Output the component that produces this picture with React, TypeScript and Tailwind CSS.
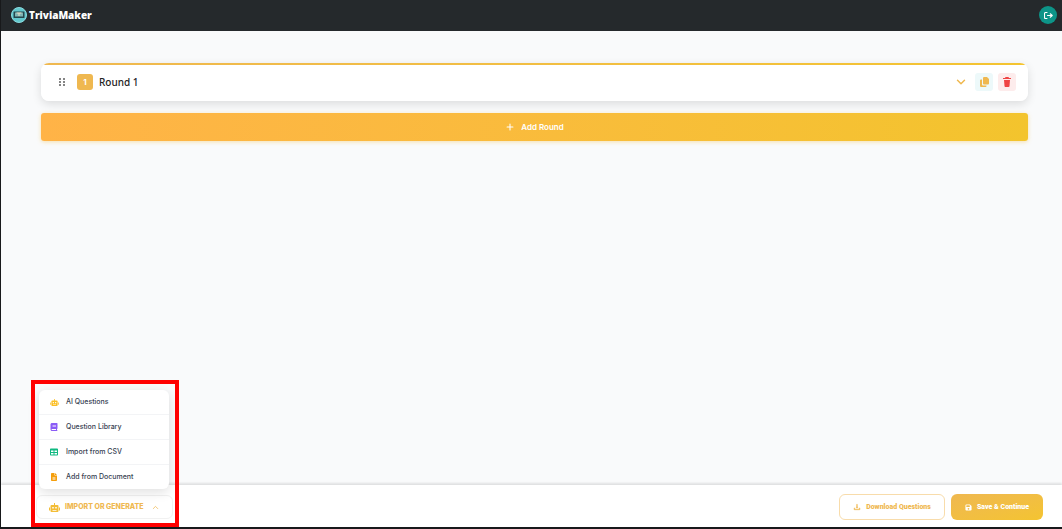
import { useState } from 'react';
import { FaBook, FaFileLines, FaFloppyDisk, FaTable } from 'react-icons/fa6';
import { AiOutlineDownload } from 'react-icons/ai';
import { ChevronDown, ChevronUp, Plus } from 'lucide-react';

function RobotIcon({ size }: { size: number }) {
    return (
        <svg viewBox="0 0 22 18" width={size} height={Math.round(size * 0.82)} fill="currentColor" aria-hidden="true">
            <path
                fillRule="evenodd"
                d="M10 0h2v4h5a2 2 0 0 1 2 2v10a2 2 0 0 1-2 2H5a2 2 0 0 1-2-2V6a2 2 0 0 1 2-2h5zM6.500 8v3h3V8zM12.500 8v3h3V8zM7 14v1.500h8V14z"
            />
            <path d="M0 9h2v6H0zM20 9h2v6h-2z" />
        </svg>
    );
}

const importOptions = [
    { label: 'AI Questions', icon: RobotIcon, size: 9, color: 'text-[#fbbf24]' },
    { label: 'Question Library', icon: FaBook, size: 8, color: 'text-[#8b5cf6]' },
    { label: 'Import from CSV', icon: FaTable, size: 8, color: 'text-[#10b981]' },
    { label: 'Add from Document', icon: FaFileLines, size: 8, color: 'text-[#f59e0b]' },
];

function Logo() {
    return (
        <svg viewBox="0 0 32 32" className="size-4" aria-hidden="true">
            <circle cx="16" cy="16" r="15" fill="#62c8cd" stroke="#8adbe0" strokeWidth="2" />
            <rect x="5" y="9" width="22" height="13" rx="1" fill="#24474d" />
            <rect x="8" y="11" width="16" height="8" fill="#7fb5b4" />
            <path d="M11 11h10v2h-4v5h-2v-5h-4z" fill="#e9dfc5" />
        </svg>
    );
}

function GripDots() {
    return (
        <svg viewBox="0 0 6 8" className="h-2 w-[6px]" fill="#858585" aria-hidden="true">
            <rect x="0" y="0" width="2" height="2" />
            <rect x="4" y="0" width="2" height="2" />
            <rect x="0" y="3" width="2" height="2" />
            <rect x="4" y="3" width="2" height="2" />
            <rect x="0" y="6" width="2" height="2" />
            <rect x="4" y="6" width="2" height="2" />
        </svg>
    );
}

function ExitIcon() {
    return (
        <svg
            viewBox="0 0 18 14"
            className="h-[7px] w-[9px]"
            fill="none"
            stroke="currentColor"
            strokeWidth="2.2"
            strokeLinecap="round"
            strokeLinejoin="round"
            aria-hidden="true"
        >
            <path d="M6 1H3a2 2 0 0 0-2 2v8a2 2 0 0 0 2 2h3" />
            <path d="M7 7h9M12.500 3.500L16.500 7l-4 3.500" />
        </svg>
    );
}

function CopyIcon() {
    return (
        <svg viewBox="0 0 18 20" className="h-[10px] w-[9px]" fill="currentColor" aria-hidden="true">
            <path d="M8 0h6l4 4v9a2 2 0 0 1-2 2H8a2 2 0 0 1-2-2V2a2 2 0 0 1 2-2z" />
            <path d="M2 5h2v10a2 2 0 0 0 2 2h7v1a2 2 0 0 1-2 2H2a2 2 0 0 1-2-2V7a2 2 0 0 1 2-2z" />
        </svg>
    );
}

function TrashIcon() {
    return (
        <svg viewBox="0 0 16 20" className="h-[10px] w-2" fill="currentColor" aria-hidden="true">
            <path d="M5 0h6l1 2h4v2H0V2h4z" />
            <path d="M2 6h12l-1 12a2 2 0 0 1-2 2H5a2 2 0 0 1-2-2z" />
        </svg>
    );
}

function Header() {
    return (
        <header className="flex h-[31px] shrink-0 items-center justify-between bg-[#25292c] pr-[5px] pb-px pl-[10px]">
            <a href="#" className="flex items-center gap-[2px] font-['Open_Sans',sans-serif] text-[10px] font-extrabold text-white">
                <Logo />
                TriviaMaker
            </a>
            <button
                aria-label="Log out"
                className="flex size-[18px] items-center justify-center rounded-full bg-[#0d9488] text-white"
            >
                <ExitIcon />
            </button>
        </header>
    );
}

function RoundCard() {
    return (
        <section className="rounded-lg shadow-[0_3px_10px_rgba(0,0,0,0.12)]">
            <div className="overflow-hidden rounded-lg bg-white">
                <div className="h-[2px] bg-linear-to-r from-[#efb850] to-[#f4c430]" />
                <div className="flex h-9 items-center pr-3 pb-[2px] pl-[18px]">
                    <button aria-label="Move round">
                        <GripDots />
                    </button>
                    <span className="ml-3 flex size-4 items-center justify-center rounded-[3px] bg-[#efb850] text-[8px] font-bold text-white">
                        1
                    </span>
                    <h2 className="ml-[6px] font-['Noto_Sans',sans-serif] text-[10px] font-medium text-[#222]">
                        Round 1
                    </h2>
                    <div className="ml-auto flex items-center gap-[5px]">
                        <button aria-label="Expand round" className="mr-[2px] text-[#efb850]">
                            <ChevronDown size={14} strokeWidth={2.5} />
                        </button>
                        <button
                            aria-label="Duplicate round"
                            className="flex size-[18px] items-center justify-center rounded-[3px] bg-[#edf9fa] text-[#efb850]"
                        >
                            <CopyIcon />
                        </button>
                        <button
                            aria-label="Delete round"
                            className="flex size-[18px] items-center justify-center rounded-[3px] bg-[#fdecec] text-[#ef4444]"
                        >
                            <TrashIcon />
                        </button>
                    </div>
                </div>
            </div>
        </section>
    );
}

function ImportMenu() {
    const [open, setOpen] = useState(true);

    return (
        <div className="relative">
            {open && (
                <ul className="absolute bottom-[30px] left-[3px] z-10 w-[130px] overflow-hidden rounded-md bg-white shadow-[0_3px_12px_rgba(0,0,0,0.13)]">
                    {importOptions.map(({ label, icon: Icon, size, color }) => (
                        <li key={label} className="border-b border-[#f3f4f6] last:border-b-0">
                            <button className="flex h-6 w-full items-center gap-[7px] pl-[10px] text-[7px] font-medium text-[#374151]">
                                <span className={`flex w-[10px] justify-center ${color}`}>
                                    <Icon size={size} />
                                </span>
                                {label}
                            </button>
                        </li>
                    ))}
                </ul>
            )}
            <button
                onClick={() => setOpen(!open)}
                aria-expanded={open}
                className="flex h-6 w-[137px] items-center gap-[5px] rounded-md border border-[#f1f1f1] bg-white pl-3 text-[7px] font-extrabold text-[#efb850]"
            >
                <span className="text-[#f3bd36]">
                    <RobotIcon size={11} />
                </span>
                IMPORT OR GENERATE
                <ChevronUp size={9} className="ml-[2px]" />
            </button>

            {/* Highlight frame round the menu */}
            <div className="pointer-events-none absolute -top-[115px] -right-[6px] -bottom-2 -left-[5px] z-20 border-4 border-[#ff0000]" />
        </div>
    );
}

export default function App() {
    return (
        <div className="flex min-h-screen bg-[#18191b] pb-[2px] pl-px font-['Inter',sans-serif]">
            <div className="flex min-w-0 flex-1 flex-col bg-[#f9fafb]">
                <Header />

                <main className="flex flex-1 flex-col gap-3 pt-8 pr-[34px] pl-10">
                    <RoundCard />
                    <button className="flex h-7 items-center justify-center gap-[6px] rounded-[3px] bg-linear-to-r from-[#ffb347] to-[#f3c42d] text-[8px] font-semibold text-white shadow-[0_1px_4px_rgba(243,188,61,0.4)]">
                        <Plus size={10} strokeWidth={2.5} />
                        Add Round
                    </button>
                </main>

                <footer className="flex h-[42px] shrink-0 items-center justify-between bg-white pt-[2px] pr-[19px] pl-[35px] shadow-[0_-2px_2px_rgba(0,0,0,0.1)]">
                    <ImportMenu />
                    <div className="flex items-center gap-[6px] font-['Roboto',sans-serif] text-[7px] font-black">
                        <button className="flex h-[26px] w-[106px] items-center justify-center gap-[5px] rounded-md border border-[#f8dcab] bg-white text-[#efb850]">
                            <AiOutlineDownload size={8} strokeWidth={60} />
                            Download Questions
                        </button>
                        <button className="flex h-[26px] w-[92px] items-center justify-center gap-[5px] rounded-md bg-linear-to-br from-[#efb850] to-[#f4c430] text-white">
                            <FaFloppyDisk size={7} />
                            Save & Continue
                        </button>
                    </div>
                </footer>
            </div>
        </div>
    );
}
